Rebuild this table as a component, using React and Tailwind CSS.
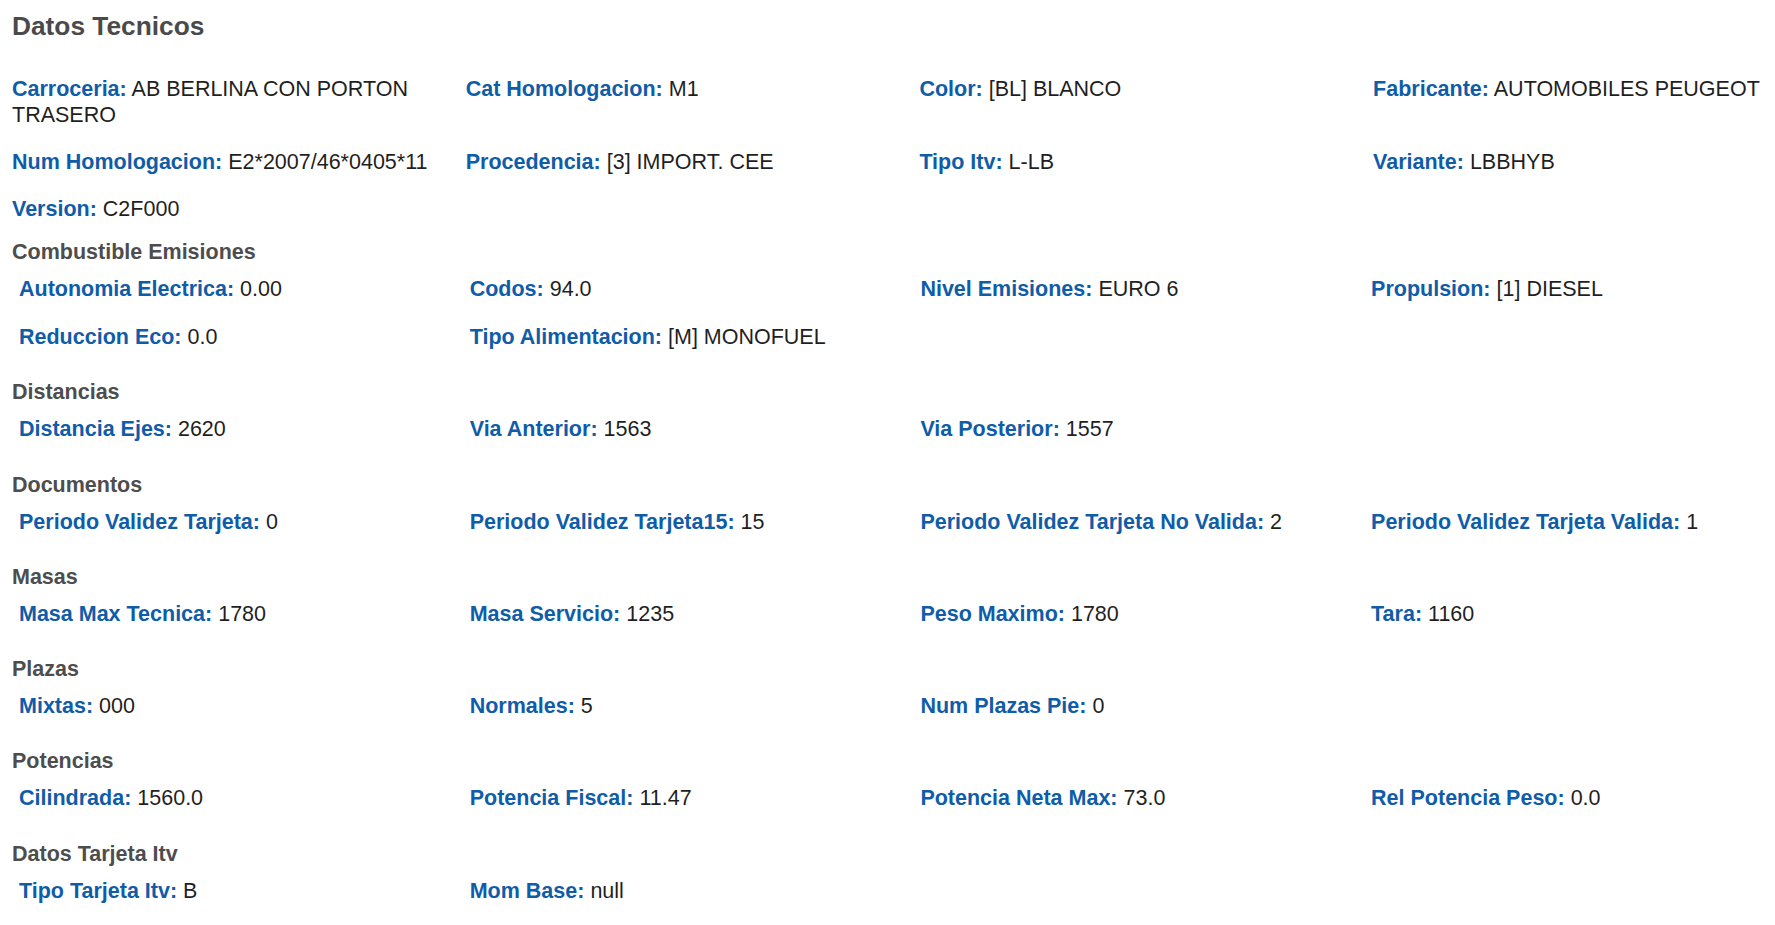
import React from 'react';

// Datos generales: primer bloque sin subtitulo
const general = [
  ['Carroceria', 'AB BERLINA CON PORTON TRASERO'],
  ['Cat Homologacion', 'M1'],
  ['Color', '[BL] BLANCO'],
  ['Fabricante', 'AUTOMOBILES PEUGEOT'],
  ['Num Homologacion', 'E2*2007/46*0405*11'],
  ['Procedencia', '[3] IMPORT. CEE'],
  ['Tipo Itv', 'L-LB'],
  ['Variante', 'LBBHYB'],
  ['Version', 'C2F000'],
];

const sections = [
  {
    title: 'Combustible Emisiones',
    items: [
      ['Autonomia Electrica', '0.00'],
      ['Codos', '94.0'],
      ['Nivel Emisiones', 'EURO 6'],
      ['Propulsion', '[1] DIESEL'],
      ['Reduccion Eco', '0.0'],
      ['Tipo Alimentacion', '[M] MONOFUEL'],
    ],
  },
  {
    title: 'Distancias',
    items: [
      ['Distancia Ejes', '2620'],
      ['Via Anterior', '1563'],
      ['Via Posterior', '1557'],
    ],
  },
  {
    title: 'Documentos',
    items: [
      ['Periodo Validez Tarjeta', '0'],
      ['Periodo Validez Tarjeta15', '15'],
      ['Periodo Validez Tarjeta No Valida', '2'],
      ['Periodo Validez Tarjeta Valida', '1'],
    ],
  },
  {
    title: 'Masas',
    items: [
      ['Masa Max Tecnica', '1780'],
      ['Masa Servicio', '1235'],
      ['Peso Maximo', '1780'],
      ['Tara', '1160'],
    ],
  },
  {
    title: 'Plazas',
    items: [
      ['Mixtas', '000'],
      ['Normales', '5'],
      ['Num Plazas Pie', '0'],
    ],
  },
  {
    title: 'Potencias',
    items: [
      ['Cilindrada', '1560.0'],
      ['Potencia Fiscal', '11.47'],
      ['Potencia Neta Max', '73.0'],
      ['Rel Potencia Peso', '0.0'],
    ],
  },
  {
    title: 'Datos Tarjeta Itv',
    items: [
      ['Tipo Tarjeta Itv', 'B'],
      ['Mom Base', 'null'],
    ],
  },
];

function Field({ label, value, tight }) {
  return (
    <div className={tight ? 'pt-[10px] pb-[11px] pr-[24px]' : 'pt-[10px] pb-[12px] pr-[24px]'}>
      <span className="font-bold text-[#0f5ca8]">{label}:</span>{' '}
      <span className="text-[#1f1f1f]">{value}</span>
    </div>
  );
}

export default function App() {
  return (
    <div className="w-[1775px] h-[925px] overflow-hidden bg-white font-['Liberation_Sans',Arial,sans-serif] text-[21.5px] leading-[26px]">
      <h2 className="pl-[12px] pt-[11px] text-[26.3px] leading-[30px] font-bold text-[#4a4a4a]">
        Datos Tecnicos
      </h2>

      {/* Bloque general */}
      <div className="mt-[25px] pl-[12px] grid grid-cols-[repeat(4,453.7px)]">
        {general.map(([label, value]) => (
          <Field key={label} label={label} value={value} tight />
        ))}
      </div>

      {/* Subsecciones */}
      <div className="mt-[6px] flex flex-col gap-[17.3px]">
        {sections.map((section) => (
          <div key={section.title}>
            <h3 className="pl-[12px] font-bold text-[#4d4d4d] leading-[26px] mb-[1px]">{section.title}</h3>
            <div className="pl-[19px] grid grid-cols-[repeat(4,450.7px)]">
              {section.items.map(([label, value]) => (
                <Field key={label} label={label} value={value} />
              ))}
            </div>
          </div>
        ))}
      </div>
    </div>
  );
}
